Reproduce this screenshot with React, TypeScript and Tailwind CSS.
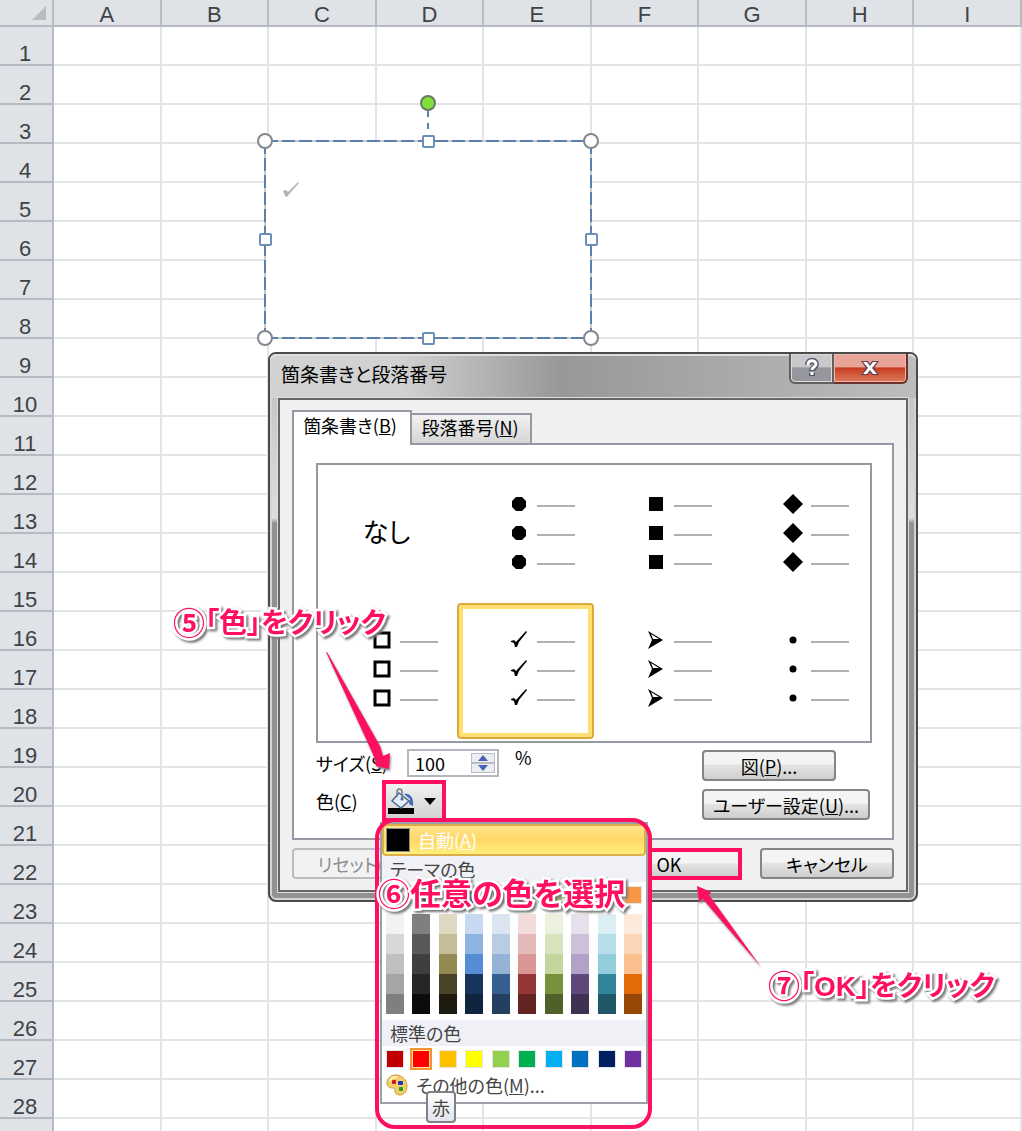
import type { ReactNode } from "react";

const columns = ["A", "B", "C", "D", "E", "F", "G", "H", "I"];
const rows = Array.from({ length: 28 }, (_, i) => i + 1);

// One array per palette column: base colour first, then its shades
const themeColors = [
  ["#ffffff", "#f2f2f2", "#d8d8d8", "#bfbfbf", "#a5a5a5", "#7f7f7f"],
  ["#000000", "#7f7f7f", "#595959", "#3f3f3f", "#262626", "#0c0c0c"],
  ["#eeece1", "#ddd9c3", "#c4bd97", "#938953", "#494429", "#1d1b10"],
  ["#1f497d", "#c6d9f0", "#8db3e2", "#548dd4", "#17365d", "#0f243e"],
  ["#4f81bd", "#dbe5f1", "#b8cce4", "#95b3d7", "#366092", "#244061"],
  ["#c0504d", "#f2dcdb", "#e5b9b7", "#d99694", "#953734", "#632423"],
  ["#9bbb59", "#ebf1dd", "#d7e3bc", "#c3d69b", "#76923c", "#4f6128"],
  ["#8064a2", "#e5e0ec", "#ccc1d9", "#b2a2c7", "#5f497a", "#3f3151"],
  ["#4bacc6", "#dbeef3", "#b7dde8", "#92cddc", "#31859b", "#205867"],
  ["#f79646", "#fdeada", "#fbd5b5", "#fac08f", "#e36c09", "#974806"],
];

const standardColors = [
  { name: "濃い赤", value: "#c00000" },
  { name: "赤", value: "#ff0000" },
  { name: "オレンジ", value: "#ffc000" },
  { name: "黄", value: "#ffff00" },
  { name: "薄い緑", value: "#92d050" },
  { name: "緑", value: "#00b050" },
  { name: "薄い青", value: "#00b0f0" },
  { name: "青", value: "#0070c0" },
  { name: "濃い青", value: "#002060" },
  { name: "紫", value: "#7030a0" },
];

const bullets = [
  { id: "disc", label: "丸", icon: <path d="M7 3h6l4 4v6l-4 4H7l-4-4V7z" /> },
  { id: "square", label: "四角", icon: <path d="M3 3h14v14H3z" /> },
  { id: "diamond", label: "ひし形", icon: <path d="M10 0l10 10-10 10L0 10z" /> },
  { id: "box", label: "白い四角", icon: <path d="M3 3h14v14H3z" fill="none" stroke="#000" strokeWidth="3" /> },
  { id: "check", label: "チェック", icon: <path d="M2 11l3-1 2 2L17 1l1 1-8 10-2 5H6l-1-4-3-1z" /> },
  { id: "arrow", label: "矢印", icon: <path fillRule="evenodd" d="M2 1l15 9L2 19l4-9zM5 4l2 5 6 0z" /> },
  { id: "dot", label: "点", icon: <circle cx="10" cy="10" r="3.5" /> },
];

function SheetTable() {
  return (
    <table className="w-full table-fixed border-separate border-spacing-0 font-['Liberation_Sans',sans-serif] text-[22px] leading-5 text-[#3f4246]">
      <thead>
        <tr className="h-[27px]">
          <th className="w-[54px] border-r-2 border-b-2 border-[#b6bbc1] bg-[#dfe2e7] p-0">
            <svg viewBox="0 0 14 14" className="mr-1.5 ml-auto size-3.5" aria-hidden="true">
              <path d="M14 0v14H0z" fill="#b9bdc2" />
            </svg>
          </th>
          {columns.map((column) => (
            <th key={column} className="border-r-2 border-b-2 border-[#b6bbc1] bg-[#dfe2e7] px-0 pt-1 pb-0 font-normal">
              {column}
            </th>
          ))}
        </tr>
      </thead>
      <tbody>
        {rows.map((row) => (
          <tr key={row} className="h-[39px]">
            <th className="border-r-2 border-b-2 border-[#b6bbc1] bg-[#dfe2e7] py-0 pr-0.5 pl-0 align-bottom font-normal">
              {row}
            </th>
            {columns.map((column) => (
              <td key={column} className="border-r-2 border-b-2 border-[#e2e4e5] p-0" />
            ))}
          </tr>
        ))}
        <tr className="h-[39px]">
          <th className="border-r-2 border-[#b6bbc1] bg-[#dfe2e7] p-0" />
          {columns.map((column) => (
            <td key={column} className="border-r-2 border-[#e2e4e5] p-0" />
          ))}
        </tr>
      </tbody>
    </table>
  );
}

function SelectedShape() {
  const corners = [[10, 48], [336, 48], [10, 245], [336, 245]];
  const sides = [[173, 48], [10, 146], [336, 146], [173, 245]];
  return (
    <svg viewBox="0 0 346 255" className="absolute top-[93px] left-[255px] h-[255px] w-[346px]" role="img" aria-label="テキスト ボックス">
      <path d="M10 48h326v197H10z" fill="#fff" stroke="#c9c9c9" strokeWidth="2" />
      <path d="M10 48h326M10 48v197M336 48v197M10 245h326" fill="none" stroke="#5b80ad" strokeWidth="2" strokeDasharray="13 4" />
      <path d="M173 10v38" fill="none" stroke="#5b80ad" strokeWidth="2" strokeDasharray="6 6" strokeDashoffset="4" />
      {corners.map(([x, y]) => (
        <circle key={`${x}-${y}`} cx={x} cy={y} r="7" fill="#fff" stroke="#85878f" strokeWidth="2" />
      ))}
      {sides.map(([x, y]) => (
        <rect key={`${x}-${y}`} x={x - 5} y={y - 5} width="11" height="11" rx="1" fill="#fff" stroke="#6c8fb9" strokeWidth="2" />
      ))}
      <circle cx="173" cy="10" r="7" fill="#80e038" stroke="#6b7a68" strokeWidth="2" />
      <path d="M28 98l3-1 2 2 10-10 1 1-9 10-3 4-2-1z" fill="#b3b3b3" />
    </svg>
  );
}

type DialogButtonProps = {
  className?: string;
  disabled?: boolean;
  children: ReactNode;
};

function DialogButton({ className = "w-[134px]", disabled, children }: DialogButtonProps) {
  return (
    <button
      type="button"
      disabled={disabled}
      className={`h-[31px] rounded border-2 border-[#858585] bg-linear-to-b from-[#f4f4f4] from-45% via-[#e4e4e4] via-50% to-[#cecece] leading-6 whitespace-nowrap disabled:border-[#b9bcc0] disabled:from-[#f2f2f2] disabled:via-[#f2f2f2] disabled:to-[#f2f2f2] disabled:text-[#8c8c8c] ${className}`}
    >
      {children}
    </button>
  );
}

function ColorMenu() {
  return (
    <div className="absolute top-full -left-1.5 z-10 mt-1 w-[268px] border-2 border-[#9b9fa8] bg-white text-[#444]">
      <button
        type="button"
        className="flex h-8 w-full items-center gap-2 rounded border-2 border-[#dcae4a] bg-linear-to-b from-[#ffe48c] via-[#ffd766] to-[#fff07c] px-0.5 leading-6 text-white"
      >
        <span className="size-6 border border-[#8c8c8c] bg-black" />
        <span>
          自動(<u>A</u>)
        </span>
      </button>
      <h3 className="bg-[#f0f1f6] px-2 text-lg leading-[26px]">テーマの色</h3>
      <div className="flex justify-between px-1 pt-1 pb-1.5">
        {themeColors.map(([base, ...shades]) => (
          <div key={base} className="flex w-[18px] flex-col">
            <button type="button" aria-label={base} className="mb-2.5 h-[18px] border border-[#e2e4e7]" style={{ backgroundColor: base }} />
            {shades.map((shade) => (
              <button key={shade} type="button" aria-label={shade} className="h-5" style={{ backgroundColor: shade }} />
            ))}
          </div>
        ))}
      </div>
      <h3 className="bg-[#f0f1f6] px-2 text-lg leading-[26px]">標準の色</h3>
      <div className="flex justify-between px-1 pt-1">
        {standardColors.map(({ name, value }) => (
          <button
            key={name}
            type="button"
            aria-label={name}
            className={
              name === "赤"
                ? "size-[18px] border border-[#ffe294] outline-2 outline-[#f29436]"
                : "size-[18px] border border-[#e2e4e7]"
            }
            style={{ backgroundColor: value }}
          />
        ))}
      </div>
      <button type="button" className="flex h-[34px] w-full items-center gap-2 px-1">
        <svg viewBox="0 0 22 22" className="size-[22px]" aria-hidden="true">
          <path d="M10 1C4 1 1 5 1 9c0 4 3 5 6 5 2 0 2 1 2 3 0 3 2 4 5 4 5 0 7-5 7-9 0-6-5-11-11-11z" fill="#f3cf6b" stroke="#c99b34" />
          <path d="M4 7c1-3 4-4 7-4" fill="none" stroke="#fff3c4" strokeWidth="2" />
          <rect x="6" y="6" width="4" height="4" rx="1" fill="#d01818" />
          <rect x="12" y="7" width="5" height="4" rx="1" fill="#1c35c9" />
          <rect x="13" y="13" width="4" height="4" rx="1" fill="#21a022" />
        </svg>
        <span>
          その他の色(<u>M</u>)...
        </span>
      </button>
      <div role="tooltip" className="absolute top-[267px] left-11 rounded border-2 border-[#7f8187] bg-linear-to-b from-white to-[#e2e4ee] px-1 leading-7">
        赤
      </div>
    </div>
  );
}

function BulletDialog() {
  return (
    <div
      role="dialog"
      aria-labelledby="dialog-title"
      className="absolute top-[352px] left-[268px] w-[650px] rounded-lg border-2 border-[#4b4b4b] bg-linear-to-b from-[#bdbdbd] via-[#dedede] via-30% to-[#929292] to-31% px-2 pb-2 font-['Noto_Sans_CJK_JP',sans-serif] text-lg text-black inset-ring-2 inset-ring-[#d3d3d3] [font-feature-settings:'palt']"
    >
      <div className="-mx-2 flex h-11 items-start justify-between rounded-t-md bg-linear-to-r from-[#d2d2d2] from-20% via-[#989898] via-45% to-[#bdbdbd] pr-2 pl-[11px] inset-shadow-[0_2px_0_#dedede]">
        <h2 id="dialog-title" className="text-[19px] leading-10">
          箇条書きと段落番号
        </h2>
        <div className="flex h-[30px]">
          <button type="button" aria-label="ヘルプ" className="flex w-[45px] items-center justify-center rounded-bl-md border-2 border-t-0 border-[#606060] bg-linear-to-b from-[#c9c9cb] from-45% to-[#96979c] to-50% inset-ring inset-ring-[#dcdcdc]">
            <svg viewBox="0 0 16 20" className="h-5 w-4" aria-hidden="true">
              <path d="M4 7c0-6 8-5 8-1 0 3-4 3-4 7M8 15v3" fill="none" stroke="#53556a" strokeWidth="6" />
              <path d="M4 7c0-6 8-5 8-1 0 3-4 3-4 6M8 14v3" fill="none" stroke="#fff" strokeWidth="3" />
            </svg>
          </button>
          <button type="button" aria-label="閉じる" className="flex w-[74px] items-center justify-center rounded-br-md border-2 border-t-0 border-l-0 border-[#6e3028] bg-linear-to-b from-[#e8a496] from-45% via-[#c83a1e] via-50% to-[#dc7a5c] inset-ring inset-ring-[#efb7aa]">
            <svg viewBox="0 0 18 16" className="h-4 w-[18px]" aria-hidden="true">
              <path d="M0 1h7l2 3 2-3h7l-5 7 5 7h-7l-2-3-2 3H0l5-7z" fill="#5d4352" />
              <path d="M2 2h4l3 4 3-4h4l-5 6 5 6h-4l-3-4-3 4H2l5-6z" fill="#fff" />
            </svg>
          </button>
        </div>
      </div>

      <div className="border-2 border-[#666] bg-[#f0f0f0] px-3 pt-2.5 pb-2.5 outline outline-[#dcdcdc]">
        <div role="tablist" className="flex items-end">
          <button type="button" role="tab" aria-selected="true" className="z-10 -mb-0.5 h-[35px] w-[120px] border-2 border-b-0 border-[#9499a3] bg-white pr-1 pb-2 leading-6">
            箇条書き(<u>B</u>)
          </button>
          <button type="button" role="tab" aria-selected="false" className="-ml-0.5 h-[30px] w-[122px] border-2 border-b-0 border-[#9499a3] bg-linear-to-b from-[#f2f2f2] to-[#d6d6d6] pr-0.5 pb-1 leading-6">
            段落番号(<u>N</u>)
          </button>
        </div>

        <div role="tabpanel" className="border-2 border-[#9499a3] bg-white pt-[18px] pr-5 pb-4 pl-[22px]">
          <div className="grid grid-cols-4 border-2 border-[#9499a3] p-0.5">
            <button type="button" className="h-[136px] pr-1 pb-2 text-[26px]">
              なし
            </button>
            {bullets.map(({ id, label, icon }) => (
              <button
                key={id}
                type="button"
                aria-label={label}
                className={
                  id === "check"
                    ? "flex h-[136px] flex-col justify-center gap-[9px] rounded border-2 border-[#dda83c] pb-1 pl-[50px] inset-ring-4 inset-ring-[#ffdf70]"
                    : "flex h-[136px] flex-col justify-center gap-[9px] pb-1 pl-[52px]"
                }
              >
                {[0, 1, 2].map((line) => (
                  <span key={line} className="flex items-center gap-2">
                    <svg viewBox="0 0 20 20" className="size-5">
                      {icon}
                    </svg>
                    <span className="mt-1 w-[38px] border-t-2 border-[#b0b0b0]" />
                  </span>
                ))}
              </button>
            ))}
          </div>

          <div className="flex justify-between pt-1.5 pr-0.5">
            <div>
              <div className="flex h-7 items-center">
                <label htmlFor="bullet-size" className="w-[91px] leading-7">
                  サイズ(<u>S</u>)
                </label>
                <div className="flex h-7 w-[92px] border-2 border-[#b4b7bf] p-0.5">
                  <input id="bullet-size" type="text" defaultValue="100" className="w-0 flex-1 pl-1 leading-5 outline-none" />
                  <div className="flex w-6 flex-col">
                    <button type="button" aria-label="増やす" className="flex flex-1 items-center justify-center border border-[#b9bcc4] bg-[#eceef2]">
                      <svg viewBox="0 0 10 6" className="h-1.5 w-2.5">
                        <path d="M5 0l5 6H0z" fill="#4a62b5" />
                      </svg>
                    </button>
                    <button type="button" aria-label="減らす" className="flex flex-1 items-center justify-center border border-[#b9bcc4] bg-[#eceef2]">
                      <svg viewBox="0 0 10 6" className="h-1.5 w-2.5">
                        <path d="M0 0h10L5 6z" fill="#4a62b5" />
                      </svg>
                    </button>
                  </div>
                </div>
                <span className="pb-3 pl-4">%</span>
              </div>
              <div className="flex items-center pt-[3px]">
                <span id="color-label" className="w-[66px]">
                  色(<u>C</u>)
                </span>
                <div className="relative border-4 border-[#ff0f5f]">
                  <button type="button" aria-labelledby="color-label" aria-haspopup="true" aria-expanded="true" className="flex h-[34px] w-14 items-center gap-2.5 bg-linear-to-b from-[#f2f2f2] to-[#d2d2d2] pl-0.5">
                    <svg viewBox="0 0 26 26" className="size-[26px]" aria-hidden="true">
                      <path d="M0 20h26v6H0z" />
                      <path d="M16 6c6-1 10 4 9 12l-4-2 1-5z" fill="#3f68bd" />
                      <path d="M11 5l10 8-8 7-9-7z" fill="#e3edfb" stroke="#4b658c" strokeWidth="1.5" />
                      <path d="M9 9V4c0-4 5-4 5 0v7" fill="none" stroke="#6c7c94" strokeWidth="1.5" />
                      <circle cx="14" cy="11" r="1.5" fill="#4b658c" />
                    </svg>
                    <svg viewBox="0 0 12 7" className="h-[7px] w-3" aria-hidden="true">
                      <path d="M0 0h12L6 7z" />
                    </svg>
                  </button>
                  <ColorMenu />
                </div>
              </div>
            </div>
            <div className="flex flex-col items-start gap-2 pt-px">
              <DialogButton>
                図(<u>P</u>)...
              </DialogButton>
              <DialogButton className="w-[168px]">
                ユーザー設定(<u>U</u>)...
              </DialogButton>
            </div>
          </div>
        </div>

        <div className="flex gap-[18px] pt-2">
          <DialogButton disabled className="mr-auto w-[134px]">
            リセット(<u>E</u>)
          </DialogButton>
          <div className="flex border-4 border-[#ff0f5f]">
            <button type="button" className="h-6 w-[138px] bg-linear-to-b from-[#f4f4f4] from-45% via-[#e4e4e4] via-50% to-[#cecece] leading-6">
              OK
            </button>
          </div>
          <DialogButton>キャンセル</DialogButton>
        </div>
      </div>
    </div>
  );
}

type CalloutProps = {
  className: string;
  step: string;
  children: ReactNode;
};

function Callout({ className, step, children }: CalloutProps) {
  return (
    <p
      className={`absolute z-20 flex items-center font-['Liberation_Sans','Noto_Sans_CJK_JP',sans-serif] leading-10 font-bold whitespace-nowrap text-[#ff0f5f] drop-shadow-[2px_2px_1px_#777] [-webkit-text-stroke:5px_#fff] [font-feature-settings:'palt'] [paint-order:stroke_fill] ${className}`}
    >
      <span className="text-[32px]">{step}</span>
      <span>{children}</span>
    </p>
  );
}

export default function App() {
  return (
    <main className="relative h-screen overflow-hidden bg-white">
      <SheetTable />
      <SelectedShape />
      <BulletDialog />

      <div className="pointer-events-none absolute top-[818px] left-[375px] z-20 h-[311px] w-[277px] rounded-[20px] border-4 border-[#ff0f5f]" />
      <svg viewBox="0 0 66 120" className="absolute top-[650px] left-[325px] z-20 h-[120px] w-[66px] drop-shadow-[1px_2px_1px_#888]" aria-hidden="true">
        <path d="M1 2h1l53 94 3 10 7-3-1 16-13-3-1-7-8-18z" fill="#ff0f5f" />
      </svg>
      <svg viewBox="0 0 66 84" className="absolute top-[885px] left-[696px] z-20 h-[84px] w-[66px] drop-shadow-[1px_2px_1px_#888]" aria-hidden="true">
        <path d="M1 1l14 6-2 3 52 72L7 14l-4 3z" fill="#ff0f5f" />
      </svg>
      <Callout step="⑤" className="top-[604px] left-[173px] text-[28px]">
        「色」をクリック
      </Callout>
      <Callout step="⑥" className="top-[875px] left-[378px] text-[31px]">
        任意の色を選択
      </Callout>
      <Callout step="⑦" className="top-[967px] left-[768px] text-[28px]">
        「OK」をクリック
      </Callout>
    </main>
  );
}
